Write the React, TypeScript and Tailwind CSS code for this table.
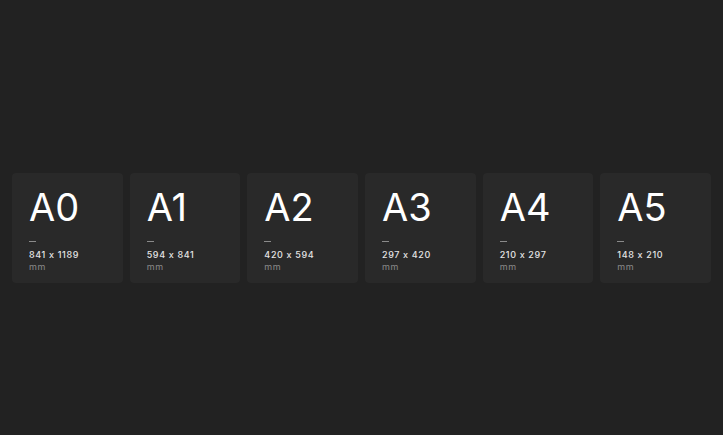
const sizes = [
  { name: "A0", dims: "841 x 1189" },
  { name: "A1", dims: "594 x 841" },
  { name: "A2", dims: "420 x 594" },
  { name: "A3", dims: "297 x 420" },
  { name: "A4", dims: "210 x 297" },
  { name: "A5", dims: "148 x 210" },
];

function SizeCard({ name, dims }: { name: string; dims: string }) {
  return (
    <div className="flex h-[110px] flex-1 flex-col items-start rounded bg-[#292929] px-[17px] pt-[15px]">
      <h2 className="text-[38px] leading-[38px] font-normal text-white">{name}</h2>
      <div className="mt-[15px] h-px w-[7px] bg-[#8a8a8a]" />
      <p className="mt-[7px] text-[9px] leading-[11.5px] font-medium tracking-[0.07em] text-[#e4e4e4]">{dims}</p>
      <p className="text-[9px] leading-[11.5px] tracking-[0.07em] text-[#8a8a8a]">mm</p>
    </div>
  );
}

export default function App() {
  return (
    <main className="flex h-screen items-center bg-[#222222] px-3 pt-[21px] font-['Inter',sans-serif] [font-feature-settings:'calt'_0]">
      <div className="flex w-full gap-[7px]">
        {sizes.map((s) => (
          <SizeCard key={s.name} {...s} />
        ))}
      </div>
    </main>
  );
}
